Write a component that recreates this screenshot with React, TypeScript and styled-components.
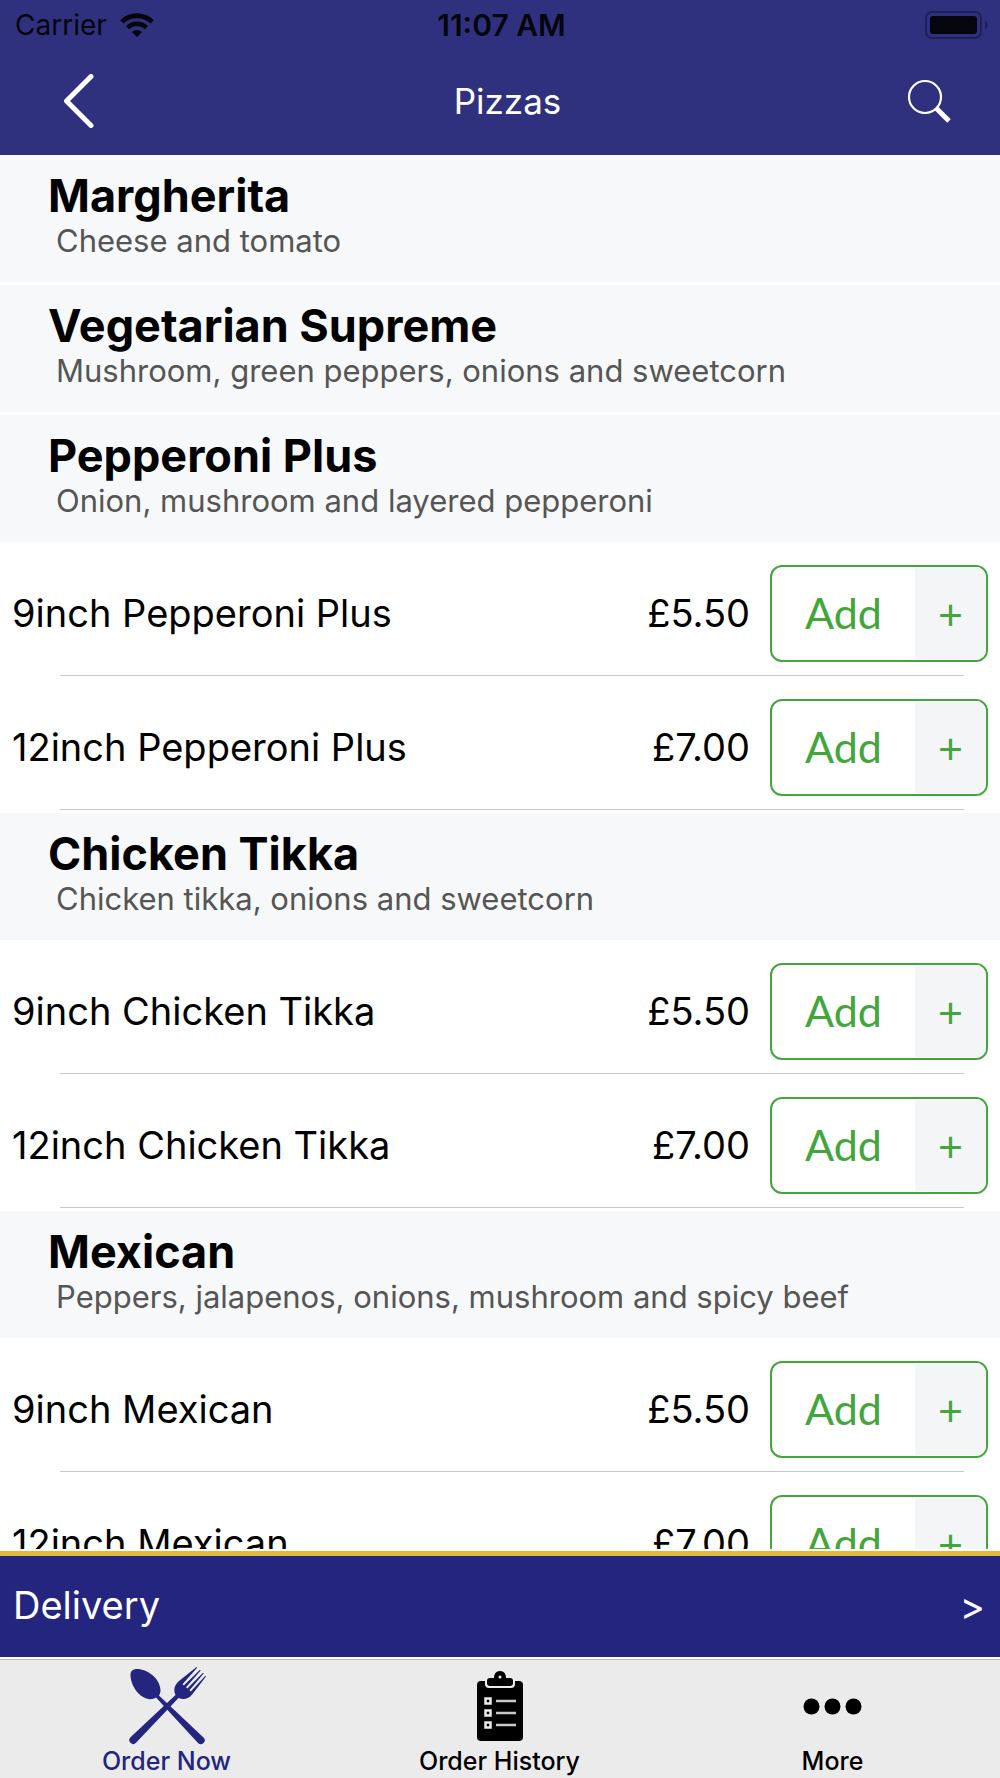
import React from "react";
import styled, { createGlobalStyle } from "styled-components";

const textFont = `Inter, Roboto, sans-serif`;
const buttonFont = `Lato, "Open Sans", sans-serif`;

const GlobalStyle = createGlobalStyle`
  *, *::before, *::after { box-sizing: border-box; }
  body { margin: 0; background: #fff; }
  h1, h2, p, ul { margin: 0; padding: 0; }
  ul { list-style: none; }
  button { margin: 0; padding: 0; border: 0; background: none; cursor: pointer; }
  svg { display: block; }
`;

const Screen = styled.div`
  display: flex;
  flex-direction: column;
  height: 100vh;
  font-family: ${textFont};
  color: #000;
`;

const Header = styled.header`
  flex: none;
  background: #30317e;
`;

const StatusBar = styled.div`
  display: grid;
  grid-template-columns: 1fr auto 1fr;
  align-items: center;
  height: 50px;
  padding: 0 12px 0 15px;
  font-size: 28px;
  line-height: 34px;
  color: #05050d;
`;

const Carrier = styled.div`
  display: flex;
  align-items: center;
  gap: 13px;
`;

const Time = styled.time`
  font-size: 30px;
  font-weight: 600;
`;

const Battery = styled.div`
  justify-self: end;
`;

const NavBar = styled.div`
  display: grid;
  grid-template-columns: 1fr auto 1fr;
  align-items: center;
  height: 105px;
  padding: 0 49px 4px 64px;
`;

const IconButton = styled.button<{ $align: "start" | "end" }>`
  justify-self: ${(p) => p.$align};
`;

const PageTitle = styled.h1`
  font-size: 35px;
  line-height: 44px;
  font-weight: 400;
  color: #fff;
`;

const Menu = styled.main`
  flex: 1;
  min-height: 0;
  overflow: hidden;
  background: #fff;
`;

const Category = styled.section`
  padding-bottom: 3px;
`;

const CategoryHeader = styled.div`
  padding: 17px 49px 20px 48px;
  background: #f7f8fa;
`;

const CategoryName = styled.h2`
  font-size: 45px;
  line-height: 48px;
  font-weight: 700;
`;

const Description = styled.p`
  padding-left: 8px;
  font-size: 31px;
  line-height: 42px;
  color: #555;
`;

const Item = styled.li`
  padding-top: 23px;
`;

const ItemRow = styled.div`
  display: flex;
  align-items: center;
  height: 97px;
  margin-bottom: 13px;
  padding: 0 12px;
  font-size: 38px;
  line-height: 46px;
`;

const ItemName = styled.span`
  flex: 1;
  padding-bottom: 2px;
`;

const Price = styled.span`
  margin-right: 20px;
  padding-bottom: 2px;
`;

const Divider = styled.div`
  height: 1px;
  margin: 0 36px 0 60px;
  background: #c8c8ca;
`;

const AddButton = styled.button`
  display: flex;
  align-self: stretch;
  width: 218px;
  overflow: hidden;
  border: 2px solid #43a63c;
  border-radius: 12px;
  background: #fff;
  color: #43a63c;
  font: 400 43px/50px ${buttonFont};
`;

const AddLabel = styled.span`
  flex: 1;
  align-self: center;
  padding-bottom: 2px;
`;

const AddPlus = styled.span`
  display: flex;
  align-items: center;
  justify-content: center;
  align-self: stretch;
  width: 71px;
  border: 1px solid #fff;
  border-width: 1px 0;
  background: #f4f5f7;
`;

const DeliveryBar = styled.button`
  flex: none;
  display: flex;
  align-items: center;
  justify-content: space-between;
  height: 106px;
  margin-top: 2px;
  padding: 0 15px 4px 13px;
  border-top: 5px solid #dfb941;
  background: #24257f;
  color: #fff;
  font: 400 38px/48px ${textFont};
`;

const DeliveryArrow = styled.span`
  padding-top: 2px;
`;

const TabBar = styled.nav`
  flex: none;
  display: grid;
  grid-template-columns: repeat(3, 1fr);
  height: 119px;
  margin-top: 2px;
  padding-right: 1px;
  border-top: 1px solid #bcbcbc;
  background: #ebebeb;
`;

const Tab = styled.a<{ $active?: boolean }>`
  display: flex;
  flex-direction: column;
  align-items: center;
  padding-top: 7px;
  color: ${(p) => (p.$active ? "#24257f" : "#000")};
  font-size: 25px;
  line-height: 30px;
  font-weight: 500;
  text-decoration: none;
`;

const TabIcon = styled.span`
  display: flex;
  align-items: center;
  height: 78px;
  margin-bottom: 1px;
`;

const WifiIcon = () => (
  <svg width="34" height="24" viewBox="0 0 34 24" aria-hidden="true">
    <path d="M1.8 8.9a21.8 21.8 0 0 1 30.4 0" fill="none" stroke="#05050d" strokeWidth="4.8" />
    <path d="M7.6 14.6a13.6 13.6 0 0 1 18.8 0" fill="none" stroke="#05050d" strokeWidth="4.6" />
    <path d="M17 24l-5-5a7.2 7.2 0 0 1 10 0z" fill="#05050d" />
  </svg>
);

const BatteryIcon = () => (
  <svg width="63" height="28" viewBox="0 0 63 28" aria-hidden="true">
    <rect x="1" y="1" width="55" height="26" rx="6" fill="none" stroke="#1f2056" strokeWidth="2" />
    <rect x="5" y="5" width="47" height="18" rx="3" fill="#05050d" />
    <path d="M60 9.5c3.4 2 3.4 7 0 9z" fill="#1f2056" />
  </svg>
);

const BackIcon = () => (
  <svg width="30" height="54" viewBox="0 0 30 54" aria-hidden="true">
    <path d="M27 2.5L2.5 27L27 51.5" fill="none" stroke="#fff" strokeWidth="5" strokeLinecap="round" strokeLinejoin="round" />
  </svg>
);

const SearchIcon = () => (
  <svg width="45" height="44" viewBox="0 0 45 44" aria-hidden="true">
    <circle cx="19" cy="18" r="16" fill="none" stroke="#fff" strokeWidth="2.2" />
    <path d="M30 29L43 42" stroke="#fff" strokeWidth="5" />
  </svg>
);

const CutleryIcon = () => (
  <svg width="78" height="78" viewBox="0 0 78 78" fill="currentColor" aria-hidden="true">
    <path d="M2.5 8C2.5 4 5 2 9 2c10 0 23 9 23.5 21 0 2-.5 4-1.5 5.5L75.5 70.5a3.8 3.8 0 0 1-5.5 5.5L28 30.5C26 32 23 32.5 20.5 32 9.5 30 2.5 17 2.5 8z" />
    <path d="M8 75.8a3.8 3.8 0 0 1-5.5-5.5L47.5 28C44.5 22 47.5 17 51 14L68.5 0l.6.7L54.5 17.3l1.3 1.3L72 2.8l.7.7L58 20.3l1.3 1.3L75 5.8l.7.7L61.5 23.3l1.3 1.3L77.4 8.8l.6.7L64.5 27C61 31.5 56 33.5 50.5 31z" />
  </svg>
);

const ClipboardIcon = () => (
  <svg width="46" height="72" viewBox="0 0 46 72" aria-hidden="true">
    <path d="M4 11h4v3q0 4 4 4h22q4 0 4-4v-3h4q4 0 4 4v52q0 4-4 4H4q-4 0-4-4V15q0-4 4-4z" />
    <path d="M13 8h4c0-4 2-7 6-7s6 3 6 7h4q3 0 3 3v2q0 3-3 3H13q-3 0-3-3v-2q0-3 3-3z" />
    <circle cx="23" cy="7" r="1.5" fill="#ebebeb" />
    {[31, 43, 55].map((y) => (
      <g key={y}>
        <rect x="8.5" y={y - 2.5} width="5" height="5" fill="none" stroke="#ebebeb" strokeWidth="2.5" />
        <path d={`M19 ${y}h20`} stroke="#c9c9c9" strokeWidth="2.5" />
      </g>
    ))}
  </svg>
);

const MoreIcon = () => (
  <svg width="59" height="17" viewBox="0 0 59 17" aria-hidden="true">
    {[8.5, 29.5, 50.5].map((x) => (
      <circle key={x} cx={x} cy="8.5" r="8" />
    ))}
  </svg>
);

type Product = { name: string; price: string };
type MenuCategory = { name: string; description: string; items: Product[] };

const sizes = (name: string): Product[] => [
  { name: `9inch ${name}`, price: "£5.50" },
  { name: `12inch ${name}`, price: "£7.00" },
];

const categories: MenuCategory[] = [
  { name: "Margherita", description: "Cheese and tomato", items: [] },
  { name: "Vegetarian Supreme", description: "Mushroom, green peppers, onions and sweetcorn", items: [] },
  { name: "Pepperoni Plus", description: "Onion, mushroom and layered pepperoni", items: sizes("Pepperoni Plus") },
  { name: "Chicken Tikka", description: "Chicken tikka, onions and sweetcorn", items: sizes("Chicken Tikka") },
  { name: "Mexican", description: "Peppers, jalapenos, onions, mushroom and spicy beef", items: sizes("Mexican") },
];

export default function App() {
  return (
    <>
      <GlobalStyle />
      <Screen>
        <Header>
          <StatusBar>
            <Carrier>
              Carrier
              <WifiIcon />
            </Carrier>
            <Time>11:07 AM</Time>
            <Battery>
              <BatteryIcon />
            </Battery>
          </StatusBar>
          <NavBar>
            <IconButton $align="start" aria-label="Back">
              <BackIcon />
            </IconButton>
            <PageTitle>Pizzas</PageTitle>
            <IconButton $align="end" aria-label="Search">
              <SearchIcon />
            </IconButton>
          </NavBar>
        </Header>
        <Menu>
          {categories.map((category) => (
            <Category key={category.name}>
              <CategoryHeader>
                <CategoryName>{category.name}</CategoryName>
                <Description>{category.description}</Description>
              </CategoryHeader>
              {category.items.length > 0 && (
                <ul>
                  {category.items.map((item) => (
                    <Item key={item.name}>
                      <ItemRow>
                        <ItemName>{item.name}</ItemName>
                        <Price>{item.price}</Price>
                        <AddButton>
                          <AddLabel>Add</AddLabel>
                          <AddPlus>+</AddPlus>
                        </AddButton>
                      </ItemRow>
                      <Divider />
                    </Item>
                  ))}
                </ul>
              )}
            </Category>
          ))}
        </Menu>
        <DeliveryBar>
          Delivery
          <DeliveryArrow>&gt;</DeliveryArrow>
        </DeliveryBar>
        <TabBar>
          <Tab href="#order" $active>
            <TabIcon>
              <CutleryIcon />
            </TabIcon>
            Order Now
          </Tab>
          <Tab href="#history">
            <TabIcon>
              <ClipboardIcon />
            </TabIcon>
            Order History
          </Tab>
          <Tab href="#more">
            <TabIcon>
              <MoreIcon />
            </TabIcon>
            More
          </Tab>
        </TabBar>
      </Screen>
    </>
  );
}
